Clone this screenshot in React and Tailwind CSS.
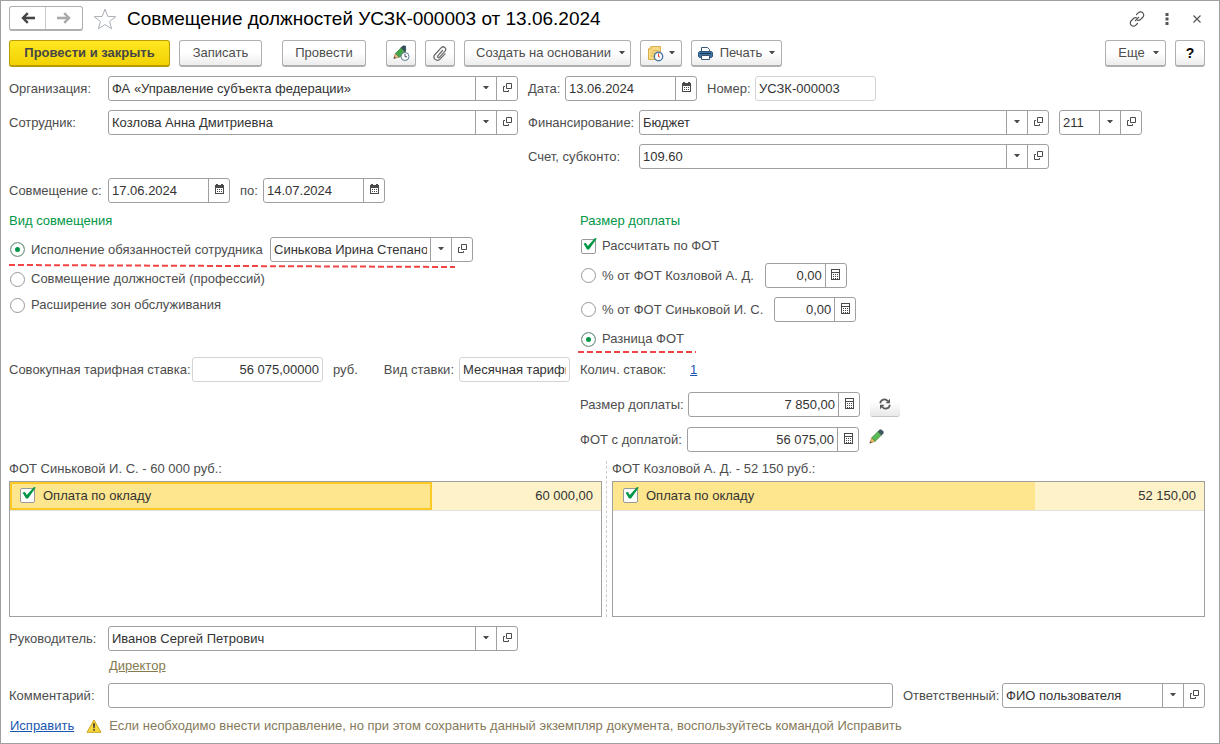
import React, { useState } from 'react';

const CaretIcon = () => (
  <svg width="6" height="4" viewBox="0 0 6 4" fill="#4a4a4a" className="shrink-0" aria-hidden="true">
    <path d="M0 0h6L3.500 3h-1z" />
  </svg>
);

const OpenIcon = () => (
  <svg width="11" height="11" viewBox="0 0 11 11" fill="none" stroke="#4a4a4a" aria-hidden="true">
    <path d="M4.500 1.500h5v5h-5z" />
    <path d="M3 4.500H1.500v5h5V8" />
  </svg>
);

const CalendarIcon = () => (
  <svg width="11" height="11" viewBox="0 0 11 11" fill="#4a4a4a" aria-hidden="true">
    <path d="M1 1h1V0h2v1h3V0h2v1h1v9H1zM2 4v5h7V4z" fillRule="evenodd" />
    <path d="M3 5h1v1H3zM5 5h1v1H5zM7 5h1v1H7zM3 7h1v1H3zM5 7h1v1H5zM7 7h1v1H7z" />
  </svg>
);

const CalcIcon = () => (
  <svg width="9" height="11" viewBox="0 0 9 11" fill="#4a4a4a" aria-hidden="true">
    <path d="M0 0h9v11H0zM1 1v2h7V1zM1 4v6h7V4z" fillRule="evenodd" />
    <path d="M2 5h1v1H2zM4 5h1v1H4zM6 5h1v1H6zM2 7h1v1H2zM4 7h1v1H4zM6 7h1v1H6zM2 9h1v1H2zM4 9h1v1H4zM6 9h1v1H6z" />
  </svg>
);

const ArrowIcon = ({ color, flip }) => (
  <svg width="14" height="12" viewBox="0 0 14 12" className={flip ? 'rotate-180' : ''} aria-hidden="true">
    <path d="M14 6H3" stroke={color} strokeWidth="2.600" />
    <path d="M6.800 1.200L2 6l4.800 4.800" fill="none" stroke={color} strokeWidth="2.400" />
  </svg>
);

const StarIcon = () => (
  <svg width="24" height="22" viewBox="0 0 24 22" fill="none" stroke="#a9b0b6" aria-hidden="true">
    <path d="M12 1.200l2.800 7.200 8 .3-6.300 4.800 2.200 7.300L12 16.600l-6.700 4.200 2.200-7.300L1.200 8.700l8-.3z" />
  </svg>
);

const LinkIcon = () => (
  <svg width="16" height="16" viewBox="0 0 16 16" fill="none" stroke="#555" strokeWidth="1.200" strokeLinecap="round" aria-hidden="true">
    <path d="M7.500 3.500l1.700-1.600a3 3 0 0 1 4.600 0 3 3 0 0 1 0 4.300L11.500 8.500a3 3 0 0 1-3.500.4" />
    <path d="M8.500 12.500l-1.700 1.600a3 3 0 0 1-4.600 0 3 3 0 0 1 0-4.300L4.500 7.500a3 3 0 0 1 3.500-.4" />
    <path d="M6.300 9.700l3.400-3.400" />
  </svg>
);

const PencilIcon = () => (
  <svg width="15" height="15" viewBox="0 0 15 15" aria-hidden="true">
    <path d="M0.800 14.200l1.900-5.400 3.500 3.500z" fill="#f2bd62" stroke="#a5763a" strokeWidth="0.600" />
    <path d="M0.800 14.200l.6-1.900 1.300 1.300z" fill="#333" />
    <path d="M2.700 8.800l6.400-6.300 3.400 3.400-6.300 6.400z" fill="#5cbb57" stroke="#3b8a40" strokeWidth="0.800" />
    <path d="M9.100 2.500L10.800.9h1.600l1.700 1.700v1.600l-1.600 1.700z" fill="#3f5c68" stroke="#2b404b" strokeWidth="0.800" />
  </svg>
);

const PencilClockIcon = () => (
  <svg width="17" height="17" viewBox="0 0 17 17" className="shrink-0" aria-hidden="true">
    <path d="M0.800 13.500l1.600-5.200 3.800 3.800z" fill="#e9b98a" stroke="#8d6a35" strokeWidth="0.600" />
    <path d="M0.800 13.500l.6-1.900 1.300 1.300z" fill="#333" />
    <path d="M2.600 8.300l5.600-5.600 4 4-5.600 5.600z" fill="#43a648" stroke="#2f7d37" strokeWidth="0.800" />
    <path d="M8.200 2.700L9.800 1h2.600l.3 3.500-.5 2.200z" fill="#35505e" stroke="#2b404b" strokeWidth="0.800" />
    <circle cx="12" cy="11.500" r="4" fill="#fff" stroke="#5d7b90" />
    <path d="M12 9v2.800h2" fill="none" stroke="#3e5a6c" />
  </svg>
);

const ClipIcon = () => (
  <svg width="14" height="15" viewBox="0 0 14 15" fill="none" stroke="#666" strokeWidth="1.200" strokeLinecap="round" aria-hidden="true">
    <path d="M9.500 4.500L4.800 9.800a1.100 1.100 0 0 0 1.600 1.500L12 5.200a2.500 2.500 0 0 0-3.700-3.500L2 8.500a3.400 3.400 0 0 0 5 4.700l5-5.400" />
  </svg>
);

const NoteClockIcon = () => (
  <svg width="17" height="17" viewBox="0 0 17 17" className="shrink-0" aria-hidden="true">
    <path d="M4 1.500h9.500v13h-12V4z" fill="#f7d983" stroke="#d9ae4a" />
    <path d="M4 1.500V4H1.500" fill="#fff2c4" stroke="#d9ae4a" />
    <path d="M5.500 5.500h6M4 8h4M4 11h3" stroke="#dfb553" />
    <circle cx="11.500" cy="11.500" r="4.200" fill="#fff" stroke="#4a77a8" strokeWidth="1.400" />
    <path d="M11.500 8.500v3l1.500.8" fill="none" stroke="#d33" />
  </svg>
);

const PrinterIcon = () => (
  <svg width="15" height="15" viewBox="0 0 15 15" className="shrink-0" aria-hidden="true">
    <path d="M3.500 5.500v-4h6l2 2v2" fill="#fff" stroke="#3c5670" />
    <path d="M1.500 5.500h12l1 1v4l-1 1h-12l-1-1v-4z" fill="#3f74a5" stroke="#2c557c" />
    <path d="M2 7.500h11" stroke="#173650" />
    <path d="M3.500 9.500h8v4h-8z" fill="#fff" stroke="#3c5670" />
  </svg>
);

const RefreshIcon = () => (
  <svg width="12" height="12" viewBox="0 0 12 12" aria-hidden="true">
    <path d="M1.300 5.300A4 4 0 0 1 8.700 3.300M10.700 6.700A4 4 0 0 1 3.300 8.700" fill="none" stroke="#5c5c5c" strokeWidth="1.800" />
    <path d="M11 .8v4.400H6.500zM1 11.200V6.800h4.500z" fill="#5c5c5c" />
  </svg>
);

const WarningIcon = () => (
  <svg width="16" height="14" viewBox="0 0 16 14" aria-hidden="true">
    <path d="M8 1l7 12.300H1z" fill="#f6d83c" stroke="#c9a51c" strokeLinejoin="round" />
    <path d="M7 4.500h2l-.4 4.800H7.400zM7.200 10.200h1.600v1.600H7.200z" fill="#333" />
  </svg>
);

const partIcons = {
  list: { Icon: CaretIcon, title: 'Выбрать' },
  open: { Icon: OpenIcon, title: 'Открыть' },
  calendar: { Icon: CalendarIcon, title: 'Календарь' },
  calc: { Icon: CalcIcon, title: 'Калькулятор' },
};

const Field = ({ id, value, label, parts = [], right, readOnly, className = '' }) => (
  <div
    className={`flex h-[25px] shrink-0 rounded-[3px] border bg-white ${
      readOnly ? 'border-[#d4d4d4]' : 'border-[#a0a0a0]'
    } ${className}`}
  >
    <input
      id={id}
      type="text"
      defaultValue={value}
      readOnly={readOnly}
      aria-label={label}
      className={`w-full min-w-0 flex-1 bg-transparent px-[3px] text-[#333] outline-none ${right ? 'text-right' : ''}`}
    />
    {parts.map((part) => {
      const { Icon, title } = partIcons[part];
      return (
        <button
          key={part}
          type="button"
          aria-label={title}
          className="flex w-[21px] shrink-0 items-center justify-center border-l border-[#a0a0a0] pb-[2px]"
        >
          <Icon />
        </button>
      );
    })}
  </div>
);

const CommandButton = ({ children, label, className = '' }) => (
  <button
    type="button"
    aria-label={label}
    className={`flex h-[27px] shrink-0 items-center justify-center whitespace-nowrap rounded-[3px] border border-b-2 border-[#b0b0b0] bg-linear-to-b from-white from-50% to-[#ececec] ${className}`}
  >
    {children}
  </button>
);

const Radio = ({ name, checked, onChange, children }) => (
  <label className="flex items-center gap-[6px] whitespace-nowrap pl-px">
    <input
      type="radio"
      name={name}
      checked={checked}
      onChange={onChange}
      className="size-[15px] appearance-none rounded-full border border-[#999] bg-white checked:bg-[#009646] checked:shadow-[inset_0_0_0_4px_#fff]"
    />
    {children}
  </label>
);

const Check = ({ children }) => (
  <label className="flex items-center gap-[6px] whitespace-nowrap pl-px">
    <span className="relative flex size-[15px]">
      <input
        type="checkbox"
        defaultChecked
        className="peer size-[15px] appearance-none rounded-[2px] border border-[#999] bg-white"
      />
      <svg
        width="16"
        height="16"
        viewBox="0 0 16 16"
        className="pointer-events-none absolute -top-[2px] left-px hidden peer-checked:block"
        aria-hidden="true"
      >
        <path d="M1.500 6.500l2.500-.5 1.800 3L13 1l1.800.6L7 12.500H5z" fill="#009646" />
      </svg>
    </span>
    {children}
  </label>
);

const DashedMark = ({ width, end, className }) => (
  <svg width={width} height="4" className={`pointer-events-none absolute ${className}`} aria-hidden="true">
    <line x1="0" y1="1" x2={width} y2={end} stroke="#f24444" strokeWidth="2" strokeDasharray="6 3" />
  </svg>
);

const PayTable = ({ title, amount, current }) => (
  <section className="flex min-w-0 flex-1 flex-col gap-1">
    <h2>{title}</h2>
    <div className="h-[136px] border border-[#a0a0a0]">
      <table className="w-full table-fixed border-collapse text-[#333]">
        <tbody>
          <tr className="h-[28px] border-b border-[#e0e0e0]">
            <td
              className={`bg-[#fee68f] px-[9px] ${current ? 'outline-2 -outline-offset-2 outline-[#fbc926]' : ''}`}
            >
              <Check>
                <span className="pl-[2px]">Оплата по окладу</span>
              </Check>
            </td>
            <td className="w-[169px] bg-[#fef2c9] px-2 text-right">{amount}</td>
          </tr>
        </tbody>
      </table>
    </div>
  </section>
);

const App = () => {
  const [kind, setKind] = useState('duties');
  const [extra, setExtra] = useState('difference');

  return (
    <div className="min-h-screen border border-[#a0a0a0] bg-white pl-2 pr-[14px] pt-[5px] font-['Liberation_Sans',Arial,sans-serif] text-[13px] leading-4 text-[#4d4d4d]">
      <header className="flex h-[25px] items-center">
        <div className="flex h-[25px] rounded-[3px] border border-b-2 border-[#b0b0b0]">
          <button type="button" aria-label="Назад" className="flex w-9 items-center justify-center border-r border-[#ccc]">
            <ArrowIcon color="#444" />
          </button>
          <button type="button" aria-label="Вперед" className="flex w-9 items-center justify-center">
            <ArrowIcon color="#a9a9a9" flip />
          </button>
        </div>
        <button type="button" aria-label="Избранное" className="ml-[10px]">
          <StarIcon />
        </button>
        <h1 className="ml-[10px] text-[19px] leading-6 text-black">Совмещение должностей УСЗК-000003 от 13.06.2024</h1>
        <div className="ml-auto flex items-center">
          <button type="button" aria-label="Ссылка">
            <LinkIcon />
          </button>
          <button type="button" aria-label="Меню" className="ml-5">
            <svg width="4" height="12" viewBox="0 0 4 12" fill="#555" aria-hidden="true">
              <path d="M.5 0h3v3h-3zM.5 4.500h3v3h-3zM.5 9h3v3h-3z" />
            </svg>
          </button>
          <button type="button" aria-label="Закрыть" className="mx-1 ml-6">
            <svg width="8" height="8" viewBox="0 0 8 8" stroke="#555" strokeWidth="1.200" aria-hidden="true">
              <path d="M.5.5l7 7M7.500.5l-7 7" />
            </svg>
          </button>
        </div>
      </header>

      <div className="mt-[9px] flex items-center">
        <button
          type="button"
          className="h-[27px] w-[161px] whitespace-nowrap rounded-[3px] border border-b-2 border-[#b89c00] bg-linear-to-b from-[#ffe71f] to-[#f2d200] font-bold text-[#464646]"
        >
          Провести и закрыть
        </button>
        <CommandButton className="ml-[9px] w-[83px]">Записать</CommandButton>
        <CommandButton className="ml-5 w-[84px]">Провести</CommandButton>
        <CommandButton label="Подписать" className="ml-5 w-[30px]">
          <PencilClockIcon />
        </CommandButton>
        <CommandButton label="Файлы" className="ml-[9px] w-[30px]">
          <ClipIcon />
        </CommandButton>
        <CommandButton className="ml-[9px] w-[167px] gap-2 pl-[6px]">
          Создать на основании
          <CaretIcon />
        </CommandButton>
        <CommandButton label="Задачи" className="ml-[9px] w-[42px] gap-[5px]">
          <NoteClockIcon />
          <CaretIcon />
        </CommandButton>
        <CommandButton className="ml-[9px] w-[91px] gap-[7px]">
          <PrinterIcon />
          Печать
          <CaretIcon />
        </CommandButton>
        <CommandButton className="ml-auto w-[61px] gap-2 pl-[6px]">
          Еще
          <CaretIcon />
        </CommandButton>
        <CommandButton label="Справка" className="ml-[9px] w-[30px] text-sm font-bold text-black">
          ?
        </CommandButton>
      </div>

      <div className="mt-[9px] grid grid-cols-[509px_1fr] items-center gap-x-[10px] gap-y-[9px]">
        <div className="flex items-center">
          <label htmlFor="org" className="w-[99px]">Организация:</label>
          <Field id="org" value="ФА «Управление субъекта федерации»" parts={['list', 'open']} className="w-[410px]" />
        </div>
        <div className="flex items-center">
          <label htmlFor="date" className="w-[37px]">Дата:</label>
          <Field id="date" value="13.06.2024" parts={['calendar']} className="w-[132px]" />
          <label htmlFor="number" className="ml-[10px] w-12">Номер:</label>
          <Field id="number" value="УСЗК-000003" readOnly className="w-[121px]" />
        </div>

        <div className="flex items-center">
          <label htmlFor="employee" className="w-[99px]">Сотрудник:</label>
          <Field id="employee" value="Козлова Анна Дмитриевна" parts={['list', 'open']} className="w-[410px]" />
        </div>
        <div className="flex items-center">
          <label htmlFor="funding" className="w-[111px]">Финансирование:</label>
          <Field id="funding" value="Бюджет" parts={['list', 'open']} className="w-[410px]" />
          <Field value="211" label="КОСГУ" parts={['list', 'open']} className="ml-[10px] w-[83px]" />
        </div>

        <div className="col-start-2 flex items-center">
          <label htmlFor="account" className="w-[111px]">Счет, субконто:</label>
          <Field id="account" value="109.60" parts={['list', 'open']} className="w-[410px]" />
        </div>

        <div className="col-span-2 flex items-center">
          <label htmlFor="from" className="w-[99px]">Совмещение с:</label>
          <Field id="from" value="17.06.2024" parts={['calendar']} className="w-[122px]" />
          <label htmlFor="to" className="ml-[10px] w-[23px]">по:</label>
          <Field id="to" value="14.07.2024" parts={['calendar']} className="w-[122px]" />
        </div>
      </div>

      <div className="mt-[10px] grid grid-cols-[561px_1fr] gap-x-[10px]">
        <fieldset className="min-w-0">
          <legend className="text-[#009646]">Вид совмещения</legend>
          <div className="relative mt-2 flex items-center">
            <div className="w-[261px]">
              <Radio name="kind" checked={kind === 'duties'} onChange={() => setKind('duties')}>
                Исполнение обязанностей сотрудника
              </Radio>
            </div>
            <Field
              value="Синькова Ирина Степановна"
              label="Сотрудник"
              parts={['list', 'open']}
              className="w-[203px]"
            />
            <DashedMark width={446} end={3} className="left-0 top-[27px]" />
          </div>
          <div className="mt-[9px] flex flex-col gap-[10px]">
            <Radio name="kind" checked={kind === 'positions'} onChange={() => setKind('positions')}>
              Совмещение должностей (профессий)
            </Radio>
            <Radio name="kind" checked={kind === 'zones'} onChange={() => setKind('zones')}>
              Расширение зон обслуживания
            </Radio>
          </div>
        </fieldset>

        <fieldset className="min-w-0">
          <legend className="text-[#009646]">Размер доплаты</legend>
          <div className="mt-[9px] flex flex-col gap-[9px]">
            <Check>Рассчитать по ФОТ</Check>
            <div className="flex items-center gap-[11px]">
              <Radio name="extra" checked={extra === 'main'} onChange={() => setExtra('main')}>
                % от ФОТ Козловой А. Д.
              </Radio>
              <Field value="0,00" label="Процент от ФОТ Козловой А. Д." right parts={['calc']} className="w-[82px]" />
            </div>
            <div className="flex items-center gap-[11px]">
              <Radio name="extra" checked={extra === 'absent'} onChange={() => setExtra('absent')}>
                % от ФОТ Синьковой И. С.
              </Radio>
              <Field value="0,00" label="Процент от ФОТ Синьковой И. С." right parts={['calc']} className="w-[82px]" />
            </div>
            <div className="relative">
              <Radio name="extra" checked={extra === 'difference'} onChange={() => setExtra('difference')}>
                Разница ФОТ
              </Radio>
              <DashedMark width={118} end={1} className="-left-[2px] top-5" />
            </div>
          </div>
        </fieldset>
      </div>

      <div className="mt-[10px] grid grid-cols-[561px_1fr] gap-x-[10px] gap-y-[10px]">
        <div className="flex items-center">
          <label htmlFor="rate" className="w-[183px] whitespace-nowrap">Совокупная тарифная ставка:</label>
          <Field id="rate" value="56 075,00000" right readOnly className="w-[131px]" />
          <span className="ml-[10px]">руб.</span>
          <label htmlFor="rate-kind" className="ml-auto whitespace-nowrap">Вид ставки:</label>
          <Field id="rate-kind" value="Месячная тарифная ставка" readOnly className="ml-[5px] w-[111px]" />
        </div>
        <div className="flex items-center">
          <span className="w-[110px]">Колич. ставок:</span>
          <a href="#rates" className="text-[#1a56b0] underline">1</a>
        </div>

        <div className="col-start-2 flex items-center">
          <label htmlFor="extra-sum" className="w-[108px]">Размер доплаты:</label>
          <Field id="extra-sum" value="7 850,00" right parts={['calc']} className="w-[172px]" />
          <button
            type="button"
            aria-label="Пересчитать"
            className="ml-[10px] flex h-[25px] w-[30px] items-center justify-center rounded-[3px] border-b border-[#c4c4c4] bg-linear-to-b from-white from-40% to-[#e8e8e8]"
          >
            <RefreshIcon />
          </button>
        </div>
        <div className="col-start-2 flex items-center">
          <label htmlFor="total" className="w-[107px]">ФОТ с доплатой:</label>
          <Field id="total" value="56 075,00" right parts={['calc']} className="w-[172px]" />
          <button type="button" aria-label="Изменить" className="ml-[10px] pb-[6px]">
            <PencilIcon />
          </button>
        </div>
      </div>

      <div className="mt-[9px] flex gap-1">
        <PayTable title="ФОТ Синьковой И. С. - 60 000 руб.:" amount="60 000,00" current />
        <div className="w-[2px] border-l border-dashed border-[#ccc]" />
        <PayTable title="ФОТ Козловой А. Д. - 52 150 руб.:" amount="52 150,00" />
      </div>

      <div className="mt-[9px] flex items-center">
        <label htmlFor="head" className="w-[99px]">Руководитель:</label>
        <Field id="head" value="Иванов Сергей Петрович" parts={['list', 'open']} className="w-[410px]" />
      </div>
      <div className="ml-[100px] mt-[7px]">
        <a href="#position" className="text-[#857a4e] underline">Директор</a>
      </div>

      <div className="mt-[9px] flex items-center">
        <label htmlFor="comment" className="w-[99px]">Комментарий:</label>
        <Field id="comment" value="" className="min-w-0 flex-1" />
        <label htmlFor="responsible" className="ml-[10px] w-[99px]">Ответственный:</label>
        <Field id="responsible" value="ФИО пользователя" parts={['list', 'open']} className="w-[203px]" />
      </div>

      <footer className="mt-[10px] flex items-center">
        <a href="#fix" className="ml-px text-[#1a56b0] underline">Исправить</a>
        <span className="ml-3">
          <WarningIcon />
        </span>
        <p className="ml-[7px] text-[#857a5a]">
          Если необходимо внести исправление, но при этом сохранить данный экземпляр документа, воспользуйтесь командой Исправить
        </p>
      </footer>
    </div>
  );
};

export default App;
